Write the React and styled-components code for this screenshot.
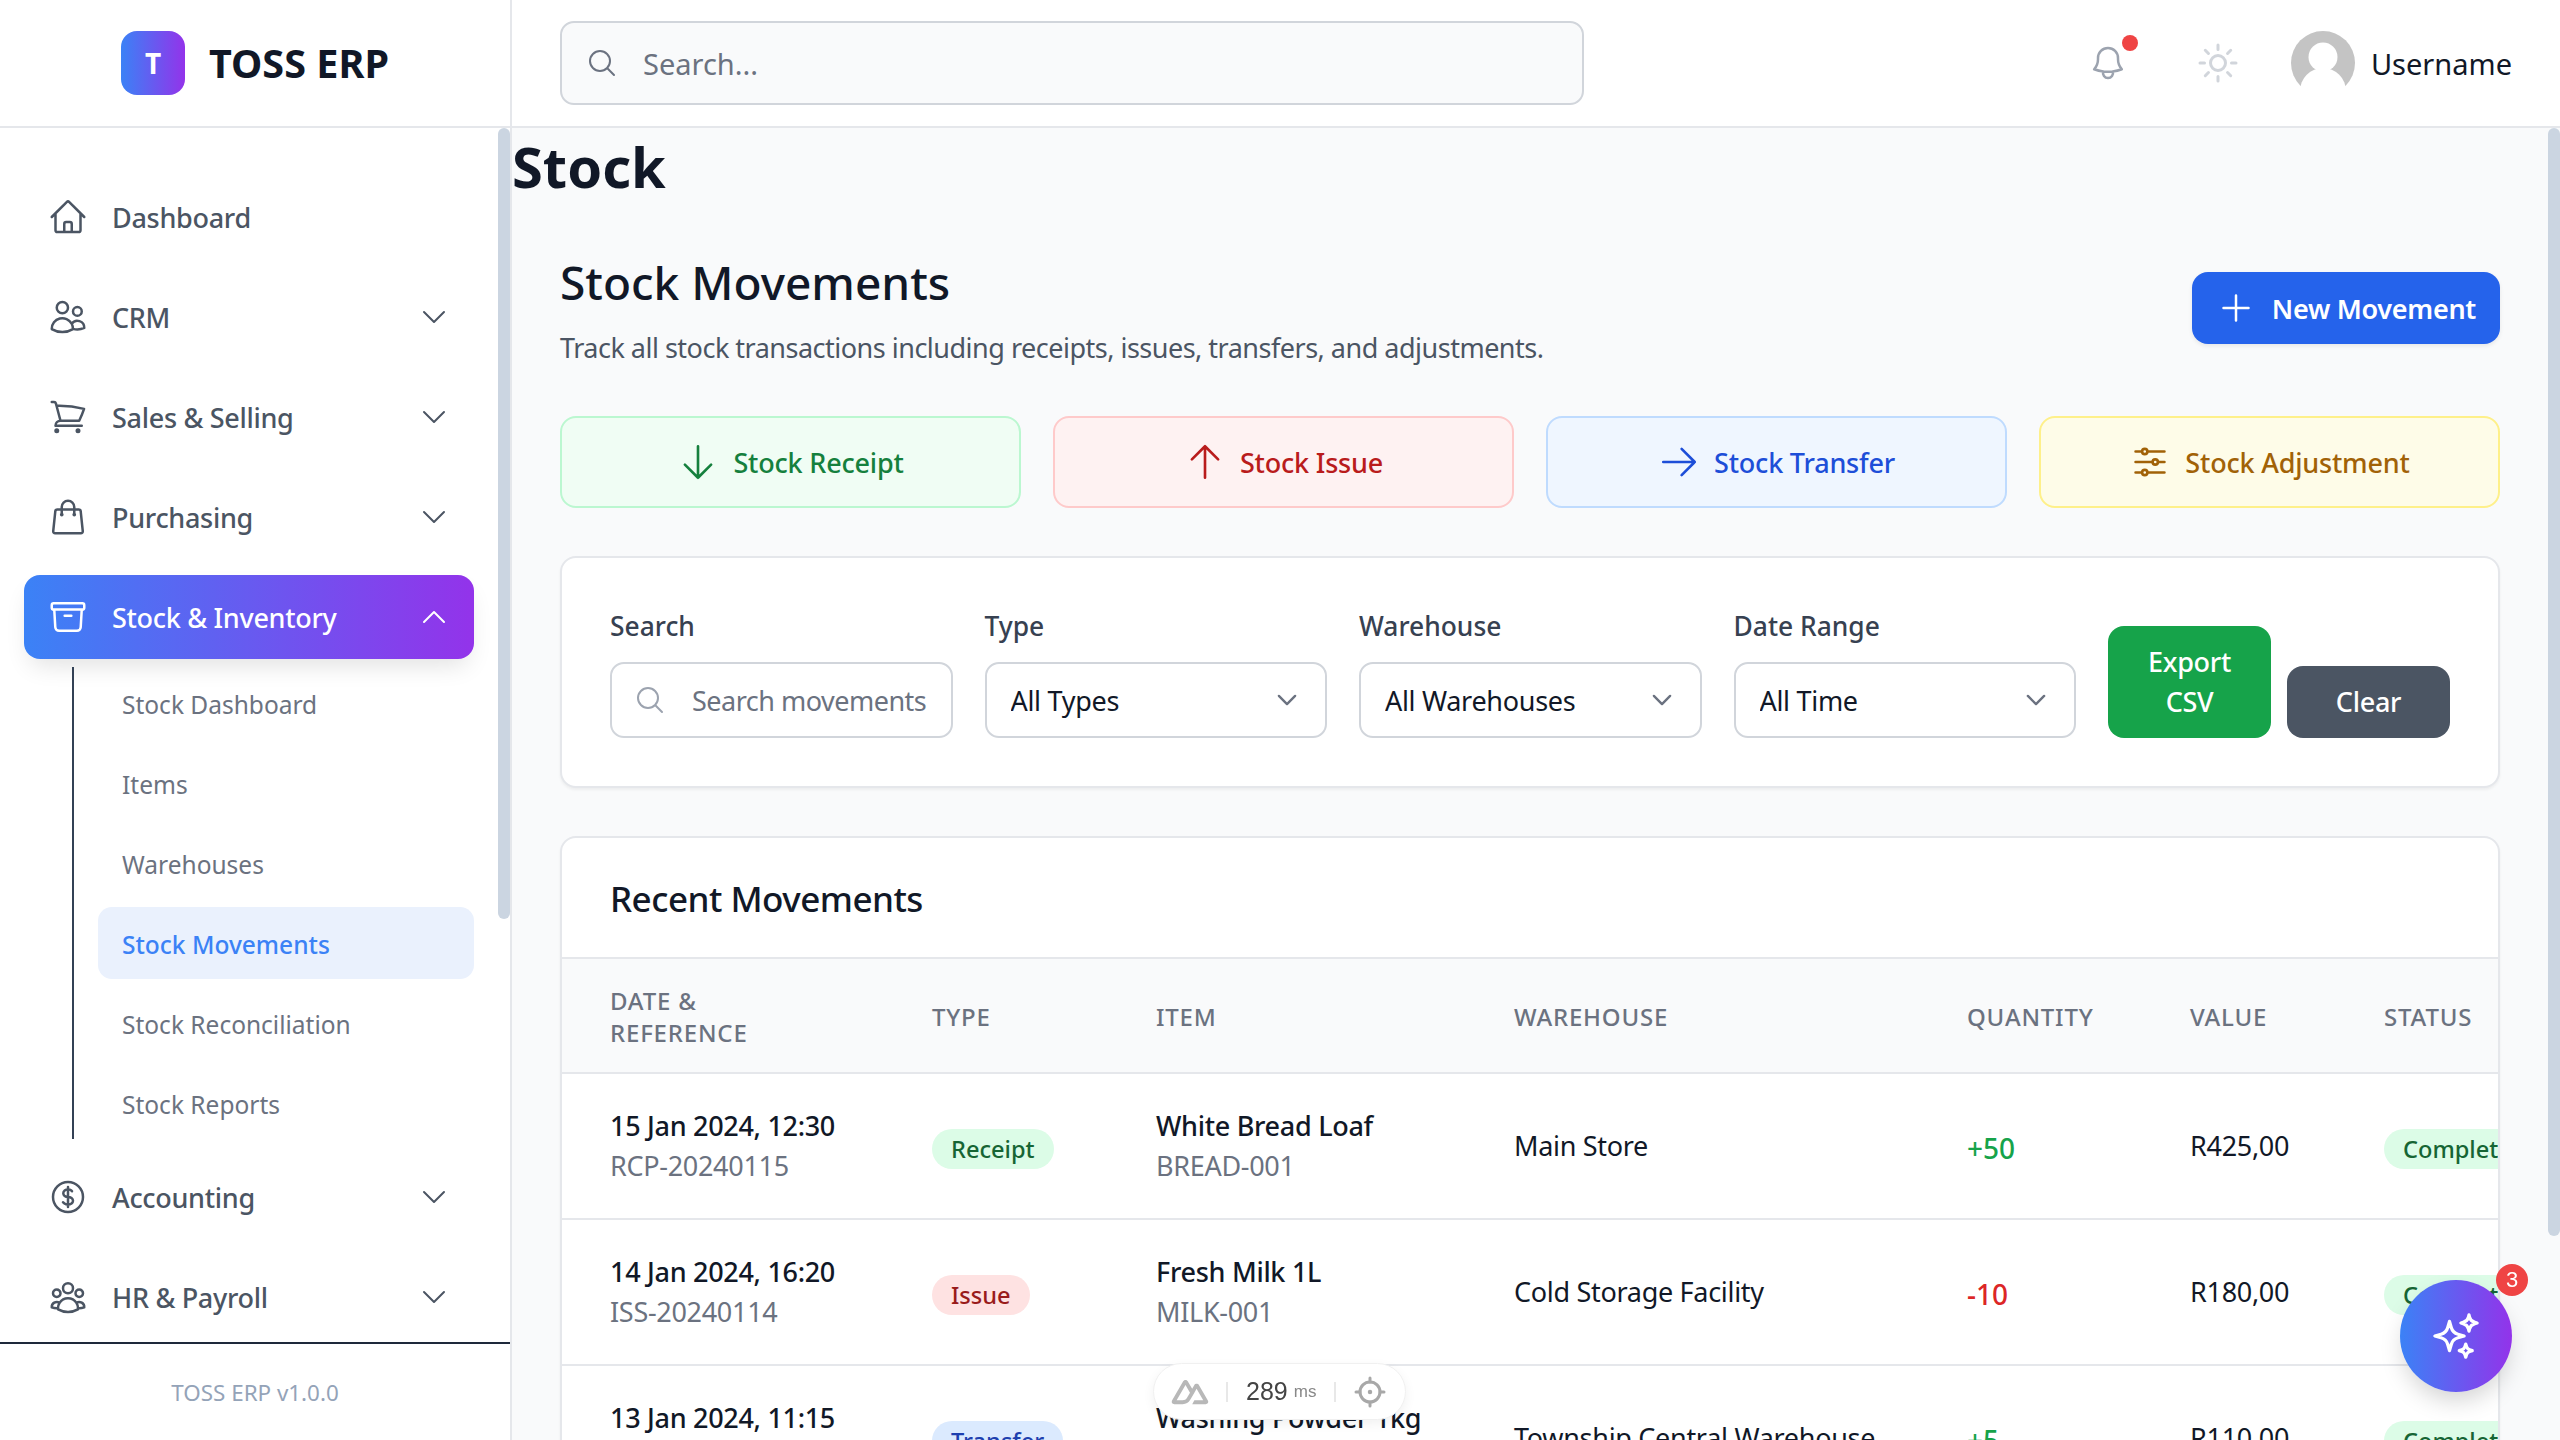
import React from 'react'
import styled, { createGlobalStyle } from 'styled-components'
import {
  HiOutlineHome,
  HiOutlineUsers,
  HiOutlineShoppingCart,
  HiOutlineShoppingBag,
  HiOutlineArchiveBox,
  HiOutlineCurrencyDollar,
  HiOutlineUserGroup,
  HiOutlineChevronDown,
  HiOutlineChevronUp,
  HiOutlineMagnifyingGlass,
  HiOutlineBell,
  HiOutlineSun,
  HiOutlinePlus,
  HiOutlineArrowDown,
  HiOutlineArrowUp,
  HiOutlineArrowRight,
  HiOutlineAdjustmentsHorizontal,
  HiOutlineSparkles
} from 'react-icons/hi2'

const GlobalStyle = createGlobalStyle`
  html, body {
    margin: 0;
    height: 100%;
    overflow: hidden;
  }
  body {
    font-family: "Noto Sans", sans-serif;
    background: #f9fafb;
    color: #111827;
  }
  * {
    box-sizing: border-box;
  }
`

const Page = styled.div`
  display: flex;
  height: 100vh;
`

const Sidebar = styled.aside`
  width: 512px;
  flex-shrink: 0;
  display: flex;
  flex-direction: column;
  background: #fff;
  border-right: 2px solid #e5e7eb;
`

const Brand = styled.div`
  height: 128px;
  flex-shrink: 0;
  display: flex;
  align-items: center;
  justify-content: center;
  gap: 24px;
  border-bottom: 2px solid #e5e7eb;
`

const BrandMark = styled.div`
  width: 64px;
  height: 64px;
  border-radius: 16px;
  display: flex;
  align-items: center;
  justify-content: center;
  background: linear-gradient(to right, #3b82f6, #9333ea);
  color: #fff;
  font-size: 28px;
  font-weight: 700;
`

const BrandName = styled.span`
  font-size: 39.6px;
  font-weight: 700;
  color: #111827;
`

const NavArea = styled.div`
  position: relative;
  flex: 1;
  min-height: 0;
`

const Thumb = styled.div`
  position: absolute;
  top: 0;
  right: 0;
  width: 12px;
  height: ${(p) => p.$height}px;
  border-radius: 6px;
  background: #cbd5e1;
`

const Nav = styled.nav`
  height: 100%;
  overflow: hidden;
  padding: 47px 36px 0 24px;
`

const NavItem = styled.a`
  display: flex;
  align-items: center;
  height: 84px;
  margin-bottom: ${(p) => (p.$active ? 8 : 16)}px;
  padding: 0 24px;
  border-radius: 16px;
  font-size: 27px;
  letter-spacing: -0.3px;
  font-weight: 500;
  color: ${(p) => (p.$active ? '#fff' : '#4b5563')};
  background: ${(p) => (p.$active ? 'linear-gradient(to right, #3b82f6, #9333ea)' : 'transparent')};
  box-shadow: ${(p) => (p.$active ? '0 12px 24px -6px rgba(0, 0, 0, .12)' : 'none')};
  svg.lead {
    font-size: 40px;
    margin-right: 24px;
    flex-shrink: 0;
  }
  svg.caret {
    font-size: 32px;
    margin-left: auto;
  }
`

const SubList = styled.div`
  margin: 0 0 16px 48px;
  padding-left: 24px;
  border-left: 2px solid #334155;
  display: flex;
  flex-direction: column;
  gap: 8px;
`

const SubItem = styled.a`
  display: flex;
  align-items: center;
  height: 72px;
  padding: 2px 24px 0;
  border-radius: 14px;
  font-size: 24.5px;
  font-weight: ${(p) => (p.$active ? 500 : 400)};
  color: ${(p) => (p.$active ? '#3b82f6' : '#6b7280')};
  background: ${(p) => (p.$active ? '#eaf1fd' : 'transparent')};
`

const SideFooter = styled.div`
  height: 98px;
  flex-shrink: 0;
  display: flex;
  align-items: center;
  justify-content: center;
  border-top: 2px solid #1e293b;
  font-size: 22.4px;
  color: #94a3b8;
`

const Column = styled.div`
  flex: 1;
  min-width: 0;
  display: flex;
  flex-direction: column;
`

const Topbar = styled.header`
  height: 128px;
  flex-shrink: 0;
  display: flex;
  align-items: center;
  padding: 0 48px;
  background: #fff;
  border-bottom: 2px solid #e5e7eb;
`

const TopSearch = styled.label`
  width: 1024px;
  height: 84px;
  display: flex;
  align-items: center;
  gap: 23px;
  padding: 0 24px;
  border: 2px solid #d1d5db;
  border-radius: 14px;
  background: #f9fafb;
  color: #6b7280;
  svg {
    font-size: 32px;
    flex-shrink: 0;
  }
`

const TopSearchInput = styled.input`
  flex: 1;
  min-width: 0;
  border: 0;
  outline: 0;
  background: transparent;
  font: 400 29px "Noto Sans", sans-serif;
  color: #111827;
  &::placeholder {
    color: #6b7280;
    opacity: 1;
  }
`

const TopActions = styled.div`
  margin-left: auto;
  display: flex;
  align-items: center;
`

const BellWrap = styled.div`
  position: relative;
  display: flex;
  color: #9ca3af;
  font-size: 40px;
  margin-right: 66px;
`

const BellDot = styled.span`
  position: absolute;
  top: -8px;
  right: -10px;
  width: 16px;
  height: 16px;
  border-radius: 50%;
  background: #ef4444;
`

const SunWrap = styled.div`
  display: flex;
  color: #d1d5db;
  font-size: 48px;
  margin-right: 49px;
`

const UserName = styled.span`
  margin-left: 16px;
  font-size: 29px;
  line-height: 40px;
  padding-top: 2px;
  color: #111827;
`

const Body = styled.div`
  position: relative;
  flex: 1;
  min-height: 0;
`

const Scroll = styled.main`
  height: 100%;
  overflow: hidden;
  background: #f9fafb;
`

const PageTitle = styled.h1`
  margin: 0;
  height: 80px;
  font-size: 56px;
  line-height: 76px;
  font-weight: 700;
  color: #111827;
`

const Content = styled.section`
  padding: 48px 60px 0 48px;
  display: flex;
  flex-direction: column;
  gap: 48px;
`

const Heading = styled.div`
  display: flex;
  justify-content: space-between;
  align-items: flex-start;
  min-height: 112px;
`

const Title = styled.h2`
  margin: 0 0 20px;
  font-size: 46px;
  line-height: 52px;
  font-weight: 500;
  color: #111827;
`

const Subtitle = styled.p`
  margin: 0;
  font-size: 27px;
  letter-spacing: -0.5px;
  line-height: 40px;
  color: #4b5563;
`

const NewButton = styled.button`
  height: 72px;
  margin-top: 16px;
  padding: 0 24px;
  display: flex;
  align-items: center;
  gap: 16px;
  border: 0;
  border-radius: 16px;
  background: #2563eb;
  box-shadow: 0 2px 4px rgba(0, 0, 0, .08);
  color: #fff;
  font: 600 27px "Noto Sans", sans-serif;
  letter-spacing: -0.3px;
  svg {
    font-size: 40px;
  }
`

const Actions = styled.div`
  display: grid;
  grid-template-columns: repeat(4, 1fr);
  gap: 32px;
`

const ActionCard = styled.button`
  height: 92px;
  display: flex;
  align-items: center;
  justify-content: center;
  gap: 14px;
  border: 2px solid ${(p) => p.$border};
  border-radius: 16px;
  background: ${(p) => p.$bg};
  color: ${(p) => p.$color};
  font: 500 27px "Noto Sans", sans-serif;
  letter-spacing: -0.2px;
  svg {
    font-size: 42px;
  }
`

const Panel = styled.div`
  background: #fff;
  border: 2px solid #e5e7eb;
  border-radius: 16px;
  box-shadow: 0 2px 3px rgba(0, 0, 0, .05);
  overflow: hidden;
`

const Filters = styled.div`
  padding: 48px;
  display: grid;
  grid-template-columns: repeat(4, 342.5px) 1fr;
  gap: 32px;
  align-items: end;
`

const Field = styled.div`
  display: flex;
  flex-direction: column;
  gap: 16px;
`

const Label = styled.label`
  font-size: 26.4px;
  line-height: 40px;
  font-weight: 500;
  color: #374151;
`

const Control = styled.div`
  position: relative;
  height: 76px;
  display: flex;
  align-items: center;
  border: 2px solid #d1d5db;
  border-radius: 14px;
  background: #fff;
  color: #6b7280;
  svg.search {
    font-size: 32px;
    margin-left: 22px;
    flex-shrink: 0;
    color: #9ca3af;
  }
  svg.caret {
    position: absolute;
    right: 25px;
    font-size: 26px;
    stroke-width: 2.2;
    pointer-events: none;
  }
`

const FilterInput = styled.input`
  flex: 1;
  min-width: 0;
  margin-left: 26px;
  padding: 0;
  border: 0;
  outline: 0;
  background: transparent;
  font: 400 27px "Noto Sans", sans-serif;
  letter-spacing: -0.5px;
  color: #111827;
  &::placeholder {
    color: #6b7280;
    opacity: 1;
  }
`

const FilterSelect = styled.select`
  width: 100%;
  height: 100%;
  padding: 0 60px 0 24px;
  border: 0;
  outline: 0;
  background: transparent;
  appearance: none;
  font: 400 27px "Noto Sans", sans-serif;
  letter-spacing: -0.3px;
  color: #111827;
`

const FilterButtons = styled.div`
  display: flex;
  align-items: flex-end;
  gap: 16px;
`

const FilterButton = styled.button`
  width: 163px;
  padding: 16px 24px;
  border: 0;
  border-radius: 16px;
  background: ${(p) => p.$bg};
  color: #fff;
  font: 500 27px/40px "Noto Sans", sans-serif;
  letter-spacing: -0.3px;
`

const PanelHead = styled.div`
  height: 121px;
  display: flex;
  align-items: center;
  padding: 2px 48px 0;
  border-bottom: 2px solid #e5e7eb;
  font-size: 35px;
  letter-spacing: -0.5px;
  font-weight: 500;
  color: #111827;
`

const Table = styled.table`
  width: 2200px;
  table-layout: fixed;
  border-collapse: collapse;
`

const Th = styled.th`
  height: 114px;
  padding: 2px 48px 0;
  background: #f9fafb;
  border-bottom: 2px solid #e5e7eb;
  text-align: left;
  font-size: 24px;
  line-height: 32px;
  font-weight: 500;
  letter-spacing: 0.8px;
  text-transform: uppercase;
  color: #6b7280;
`

const Td = styled.td`
  height: 146px;
  padding: 0 48px;
  border-bottom: 2px solid #e5e7eb;
  font-size: 27px;
  letter-spacing: -0.3px;
  color: #111827;
  white-space: nowrap;
`

const CellMain = styled.div`
  line-height: 40px;
  font-weight: 500;
  color: #111827;
`

const CellSub = styled.div`
  line-height: 40px;
  color: #6b7280;
`

const CellPlain = styled.div`
  margin-bottom: 2px;
`

const Badge = styled.span`
  display: inline-block;
  margin-top: 6px;
  padding: 0 19px;
  border-radius: 20px;
  font-size: 23.6px;
  letter-spacing: 0;
  line-height: 40px;
  font-weight: 500;
  background: ${(p) => p.$bg};
  color: ${(p) => p.$color};
`

const Quantity = styled.span`
  display: inline-block;
  margin-top: 3px;
  font-size: 28px;
  letter-spacing: 0;
  font-weight: 500;
  color: ${(p) => p.$color};
`

const PerfPill = styled.div`
  position: fixed;
  left: 1153px;
  top: 1363px;
  width: 253px;
  height: 57px;
  display: flex;
  align-items: center;
  padding: 0 14px;
  background: #fff;
  border: 1px solid #f0f0f0;
  border-radius: 29px;
  box-shadow: 0 4px 12px rgba(0, 0, 0, .06);
`

const PerfDivider = styled.span`
  width: 2px;
  height: 20px;
  background: #e8e8e8;
  margin: 0 18px 0 14px;
`

const PerfValue = styled.span`
  font: 400 25px "Liberation Sans", sans-serif;
  color: #444;
`

const PerfUnit = styled.span`
  margin: 0 4px 0 6px;
  font: 400 17px "Liberation Sans", sans-serif;
  color: #888;
`

const Fab = styled.button`
  position: fixed;
  left: 2400px;
  top: 1280px;
  width: 112px;
  height: 112px;
  display: flex;
  align-items: center;
  justify-content: center;
  border: 0;
  border-radius: 50%;
  background: linear-gradient(to right, #3b82f6, #9333ea);
  box-shadow: 0 12px 24px -4px rgba(0, 0, 0, .18);
  color: #fff;
  font-size: 52px;
`

const FabCount = styled.span`
  position: absolute;
  top: -16px;
  right: -16px;
  width: 32px;
  height: 32px;
  display: flex;
  align-items: center;
  justify-content: center;
  border-radius: 50%;
  background: #ef4444;
  color: #fff;
  font-size: 22px;
`

const navTop = [
  { label: 'Dashboard', icon: HiOutlineHome },
  { label: 'CRM', icon: HiOutlineUsers },
  { label: 'Sales & Selling', icon: HiOutlineShoppingCart },
  { label: 'Purchasing', icon: HiOutlineShoppingBag }
]

const navBottom = [
  { label: 'Accounting', icon: HiOutlineCurrencyDollar },
  { label: 'HR & Payroll', icon: HiOutlineUserGroup }
]

const subItems = ['Stock Dashboard', 'Items', 'Warehouses', 'Stock Movements', 'Stock Reconciliation', 'Stock Reports']

const actions = [
  { label: 'Stock Receipt', icon: HiOutlineArrowDown, bg: '#f0fdf4', border: '#bbf7d0', color: '#15803d' },
  { label: 'Stock Issue', icon: HiOutlineArrowUp, bg: '#fef2f2', border: '#fecaca', color: '#b91c1c' },
  { label: 'Stock Transfer', icon: HiOutlineArrowRight, bg: '#eff6ff', border: '#bfdbfe', color: '#1d4ed8' },
  { label: 'Stock Adjustment', icon: HiOutlineAdjustmentsHorizontal, bg: '#fefce8', border: '#fef08a', color: '#a16207' }
]

const badgeColors = {
  Receipt: ['#dcfce7', '#166534'],
  Issue: ['#fee2e2', '#991b1b'],
  Transfer: ['#dbeafe', '#1e40af'],
  Completed: ['#dcfce7', '#166534']
}

const columns = [
  ['Date & Reference', 322],
  ['Type', 224],
  ['Item', 358],
  ['Warehouse', 453],
  ['Quantity', 223],
  ['Value', 194],
  ['Status', 426]
]

const movements = [
  { date: '15 Jan 2024, 12:30', ref: 'RCP-20240115', type: 'Receipt', item: 'White Bread Loaf', sku: 'BREAD-001', warehouse: 'Main Store', qty: '+50', value: 'R425,00' },
  { date: '14 Jan 2024, 16:20', ref: 'ISS-20240114', type: 'Issue', item: 'Fresh Milk 1L', sku: 'MILK-001', warehouse: 'Cold Storage Facility', qty: '-10', value: 'R180,00' },
  { date: '13 Jan 2024, 11:15', ref: 'TRF-20240113', type: 'Transfer', item: 'Washing Powder 1kg', sku: 'WASH-001', warehouse: 'Township Central Warehouse', qty: '+5', value: 'R110,00' }
]

const Avatar = () => (
  <svg width="64" height="64" viewBox="0 0 64 64">
    <circle cx="32" cy="32" r="32" fill="#c4c4c4" />
    <circle cx="32" cy="26" r="14.5" fill="#fff" />
    <circle cx="32" cy="60" r="23" fill="#fff" />
    <rect x="0" y="56" width="64" height="8" fill="#fff" />
  </svg>
)

const NuxtMark = () => (
  <svg width="44" height="44" viewBox="0 0 512 512" fill="#b8b8b8">
    <path d="M281.44 397.667H438.32C443.326 397.667 448.118 395.908 452.453 393.427C456.789 390.946 461.258 387.831 463.76 383.533C466.262 379.236 468.003 374.36 468 369.399C467.997 364.437 466.266 359.563 463.76 355.268L357.76 172.947C355.258 168.65 352.201 165.534 347.867 163.053C343.532 160.573 337.34 158.813 332.333 158.813C327.327 158.813 322.535 160.573 318.2 163.053C313.866 165.534 310.809 168.65 308.307 172.947L281.44 219.587L227.733 129.13C225.229 124.834 222.176 120.307 217.84 117.827C213.504 115.346 208.713 115 203.707 115C198.701 115 193.909 115.346 189.573 117.827C185.238 120.307 180.771 124.834 178.267 129.13L46.8267 355.268C44.3208 359.563 44.0032 364.437 44 369.399C43.9968 374.36 44.3399 379.235 46.8427 383.533C49.3455 387.83 53.8142 390.946 58.1493 393.427C62.4845 395.908 67.2763 397.667 72.2827 397.667H171.2C210.401 397.667 238.934 380.082 258.827 346.787L306.88 263.4L332.32 219.587L410.053 352.44H306.88L281.44 397.667ZM169.787 352.44H100.587L203.707 174.36L256 263.4L221.361 323.784C208.151 345.387 193.089 352.44 169.787 352.44Z" />
  </svg>
)

const TargetIcon = () => (
  <svg width="32" height="32" viewBox="0 0 32 32" fill="none" stroke="#a8a8a8" strokeWidth="3" strokeLinecap="round">
    <circle cx="16" cy="16" r="10" />
    <circle cx="16" cy="16" r="1.5" fill="#a8a8a8" strokeWidth="1.5" />
    <path d="M16 2v4M16 26v4M2 16h4M26 16h4" />
  </svg>
)

const SideLink = ({ item, active }) => {
  const Icon = item.icon
  const Caret = active ? HiOutlineChevronUp : HiOutlineChevronDown
  return (
    <NavItem $active={active}>
      <Icon className="lead" />
      {item.label}
      {item.label !== 'Dashboard' && <Caret className="caret" />}
    </NavItem>
  )
}

const SelectField = ({ label, value }) => (
  <Field>
    <Label>{label}</Label>
    <Control>
      <FilterSelect defaultValue={value}>
        <option>{value}</option>
      </FilterSelect>
      <HiOutlineChevronDown className="caret" />
    </Control>
  </Field>
)

const App = () => {
  return (
    <Page>
      <GlobalStyle />
      <Sidebar>
        <Brand>
          <BrandMark>T</BrandMark>
          <BrandName>TOSS ERP</BrandName>
        </Brand>
        <NavArea>
          <Nav>
            {navTop.map((item) => (
              <SideLink key={item.label} item={item} />
            ))}
            <SideLink item={{ label: 'Stock & Inventory', icon: HiOutlineArchiveBox }} active />
            <SubList>
              {subItems.map((label) => (
                <SubItem key={label} $active={label === 'Stock Movements'}>{label}</SubItem>
              ))}
            </SubList>
            {navBottom.map((item) => (
              <SideLink key={item.label} item={item} />
            ))}
          </Nav>
          <Thumb $height={791} />
        </NavArea>
        <SideFooter>TOSS ERP v1.0.0</SideFooter>
      </Sidebar>
      <Column>
        <Topbar>
          <TopSearch>
            <HiOutlineMagnifyingGlass />
            <TopSearchInput placeholder="Search..." />
          </TopSearch>
          <TopActions>
            <BellWrap>
              <HiOutlineBell />
              <BellDot />
            </BellWrap>
            <SunWrap>
              <HiOutlineSun />
            </SunWrap>
            <Avatar />
            <UserName>Username</UserName>
          </TopActions>
        </Topbar>
        <Body>
          <Scroll>
            <PageTitle>Stock</PageTitle>
            <Content>
              <Heading>
                <div>
                  <Title>Stock Movements</Title>
                  <Subtitle>Track all stock transactions including receipts, issues, transfers, and adjustments.</Subtitle>
                </div>
                <NewButton>
                  <HiOutlinePlus />
                  New Movement
                </NewButton>
              </Heading>
              <Actions>
                {actions.map(({ label, icon: Icon, bg, border, color }) => (
                  <ActionCard key={label} $bg={bg} $border={border} $color={color}>
                    <Icon />
                    {label}
                  </ActionCard>
                ))}
              </Actions>
              <Panel>
                <Filters>
                  <Field>
                    <Label>Search</Label>
                    <Control>
                      <HiOutlineMagnifyingGlass className="search" />
                      <FilterInput placeholder="Search movements" />
                    </Control>
                  </Field>
                  <SelectField label="Type" value="All Types" />
                  <SelectField label="Warehouse" value="All Warehouses" />
                  <SelectField label="Date Range" value="All Time" />
                  <FilterButtons>
                    <FilterButton $bg="#16a34a">Export CSV</FilterButton>
                    <FilterButton $bg="#4b5563">Clear</FilterButton>
                  </FilterButtons>
                </Filters>
              </Panel>
              <Panel>
                <PanelHead>Recent Movements</PanelHead>
                <Table>
                  <colgroup>
                    {columns.map(([name, width]) => (
                      <col key={name} width={width} />
                    ))}
                  </colgroup>
                  <thead>
                    <tr>
                      {columns.map(([name]) => (
                        <Th key={name}>{name}</Th>
                      ))}
                    </tr>
                  </thead>
                  <tbody>
                    {movements.map((row) => (
                      <tr key={row.ref}>
                        <Td>
                          <CellMain>{row.date}</CellMain>
                          <CellSub>{row.ref}</CellSub>
                        </Td>
                        <Td>
                          <Badge $bg={badgeColors[row.type][0]} $color={badgeColors[row.type][1]}>{row.type}</Badge>
                        </Td>
                        <Td>
                          <CellMain>{row.item}</CellMain>
                          <CellSub>{row.sku}</CellSub>
                        </Td>
                        <Td>
                          <CellPlain>{row.warehouse}</CellPlain>
                        </Td>
                        <Td>
                          <Quantity $color={row.qty[0] === '+' ? '#16a34a' : '#dc2626'}>{row.qty}</Quantity>
                        </Td>
                        <Td>
                          <CellPlain>{row.value}</CellPlain>
                        </Td>
                        <Td>
                          <Badge $bg={badgeColors.Completed[0]} $color={badgeColors.Completed[1]}>Completed</Badge>
                        </Td>
                      </tr>
                    ))}
                  </tbody>
                </Table>
              </Panel>
            </Content>
          </Scroll>
          <Thumb $height={1108} />
        </Body>
      </Column>
      <PerfPill>
        <NuxtMark />
        <PerfDivider />
        <PerfValue>289</PerfValue>
        <PerfUnit>ms</PerfUnit>
        <PerfDivider />
        <TargetIcon />
      </PerfPill>
      <Fab>
        <HiOutlineSparkles />
        <FabCount>3</FabCount>
      </Fab>
    </Page>
  )
}

export default App
